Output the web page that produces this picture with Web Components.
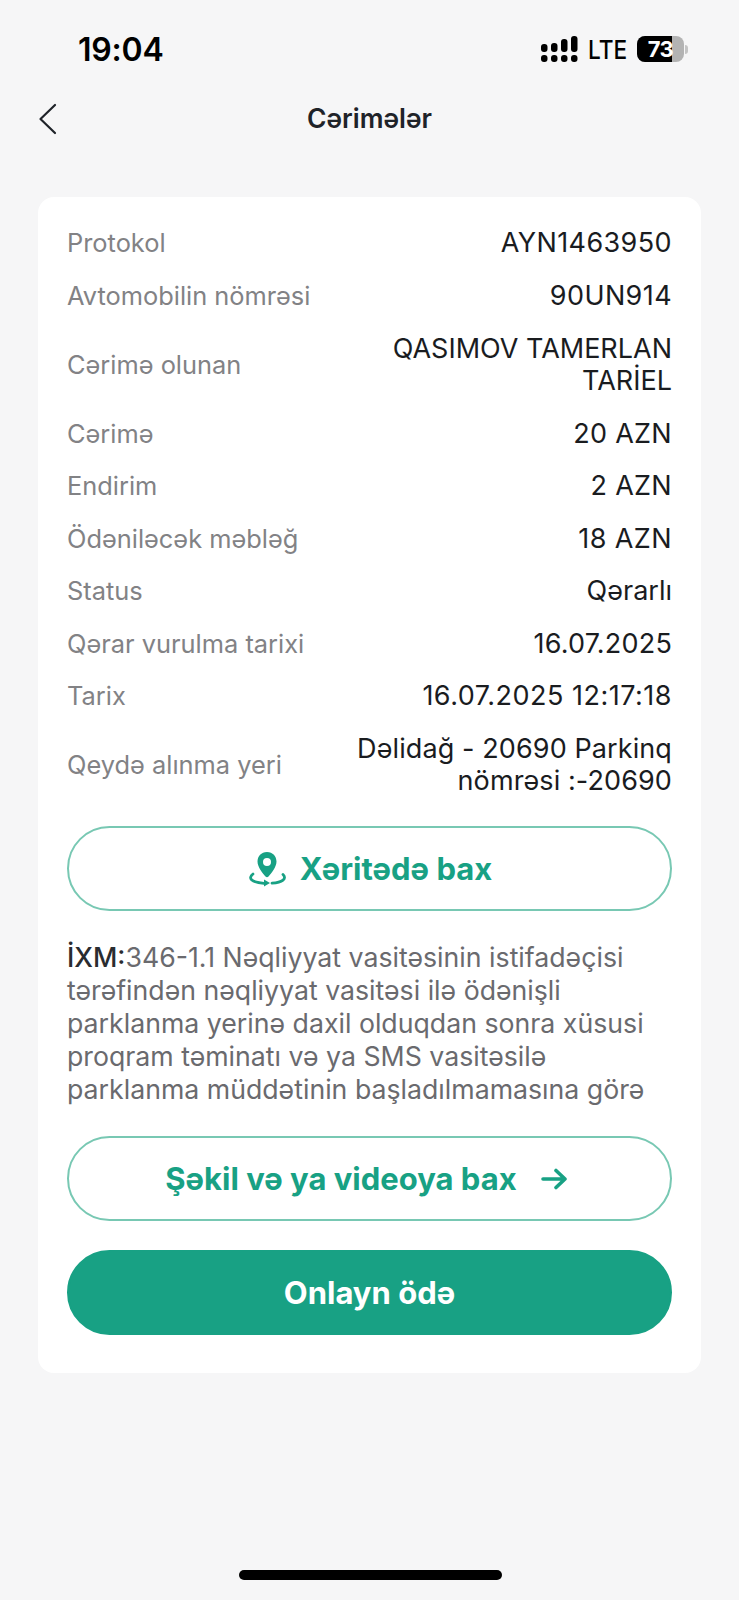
<!DOCTYPE html>
<html>
<head>
<meta charset="utf-8">
<style>
html,body{margin:0;padding:0;background:#f6f6f7;}
body{font-family:Inter,"Liberation Sans",sans-serif;width:739px;height:1600px;overflow:hidden;}
</style>
</head>
<body>
<status-bar></status-bar>
<nav-bar>Cərimələr</nav-bar>
<fine-card>
  <info-row label="Protokol" style="--ls:.4px">AYN1463950</info-row>
  <info-row label="Avtomobilin nömrəsi" style="--ls:.4px">90UN914</info-row>
  <info-row label="Cərimə olunan" style="min-height:86px">QASIMOV TAMERLAN<br>TARİEL</info-row>
  <info-row label="Cərimə" style="--ls:.3px">20 AZN</info-row>
  <info-row label="Endirim" style="--ls:.3px">2 AZN</info-row>
  <info-row label="Ödəniləcək məbləğ" style="--ls:.4px">18 AZN</info-row>
  <info-row label="Status">Qərarlı</info-row>
  <info-row label="Qərar vurulma tarixi" style="--ls:.2px">16.07.2025</info-row>
  <info-row label="Tarix" style="--ls:.5px">16.07.2025 12:17:18</info-row>
  <info-row label="Qeydə alınma yeri" style="min-height:86px;--ls:.1px">Dəlidağ - 20690 Parkinq<br>nömrəsi :-20690</info-row>
  <pill-button style="margin-top:18px">
    <svg slot="before" width="40" height="38" viewBox="0 0 40 38" fill="none">
      <path fill="#18a184" fill-rule="evenodd" d="M20 2C14.200 2 10.500 6.400 10.500 11.500c0 5.600 5.400 12.200 8 15 .9.900 2.100.900 3 0 2.600-2.800 8-9.400 8-15C29.500 6.400 25.800 2 20 2zm0 6a4 4 0 1 1 0 8 4 4 0 0 1 0-8z"/>
      <path stroke="#18a184" stroke-width="2.800" stroke-linecap="round" d="M6 24c-5 4-2.500 8.300 11 9.300M36 24.500c4.200 4-.5 7.900-11 8.700"/>
      <path fill="#18a184" d="M17 29.500l6 3.500-6 3.500z"/>
    </svg>
    Xəritədə bax
  </pill-button>
  <note-text><b>İXM:</b>346-1.1 Nəqliyyat vasitəsinin istifadəçisi<br>tərəfindən nəqliyyat vasitəsi ilə ödənişli<br>parklanma yerinə daxil olduqdan sonra xüsusi<br>proqram təminatı və ya SMS vasitəsilə<br>parklanma müddətinin başladılmamasına görə</note-text>
  <pill-button style="padding-right:7px">
    Şəkil və ya videoya bax
    <svg slot="after" width="26" height="22" viewBox="0 0 26 22" fill="none" stroke="#18a184" stroke-width="3.600" stroke-linecap="round" stroke-linejoin="round"><path d="M2 11h22M15 2.500l9 8.500-9 8.500"/></svg>
  </pill-button>
  <pill-button filled style="margin-top:29px">Onlayn ödə</pill-button>
</fine-card>
<home-bar></home-bar>
<script>
class StatusBar extends HTMLElement{
  constructor(){
    super();
    this.attachShadow({mode:"open"}).innerHTML=`
    <style>
    :host{display:flex;justify-content:space-between;align-items:center;height:50px;padding:24px 51px 0 78px;color:#000;}
    .time{font-size:32px;font-weight:600;letter-spacing:-.2px;}
    .right{display:flex;align-items:center;gap:10px;}
    .lte{font-size:26px;font-weight:500;transform:scaleX(.87);transform-origin:left;width:37px;margin-right:2px;}
    .batt{position:relative;width:47px;height:26px;border-radius:8px;overflow:hidden;background:#b3b3b3;display:flex;align-items:center;justify-content:center;}
    .fill{position:absolute;left:0;top:0;bottom:0;width:35px;background:#000;}
    .num{position:relative;color:#fff;font-size:22px;font-weight:700;letter-spacing:-.5px;}
    .tip{width:3px;height:9px;border-radius:0 3px 3px 0;background:#c4c4c4;margin-left:-9px;}
    </style>
    <span class="time">19:04</span>
    <span class="right">
      <svg width="38" height="28" viewBox="0 0 38 28" fill="#000">
        <rect x="1" y="9" width="6.500" height="8" rx="3"/><rect x="1" y="20" width="6.500" height="7" rx="3"/>
        <rect x="11" y="8" width="6.500" height="9" rx="3"/><rect x="11" y="20" width="6.500" height="7" rx="3"/>
        <rect x="21" y="4" width="6.500" height="13" rx="3"/><rect x="21" y="20" width="6.500" height="7" rx="3"/>
        <rect x="31" y="1" width="6.500" height="16" rx="3"/><rect x="31" y="20" width="6.500" height="7" rx="3"/>
      </svg>
      <span class="lte">LTE</span>
      <span class="batt"><span class="fill"></span><span class="num">73</span></span><span class="tip"></span>
    </span>`;
  }
}
customElements.define("status-bar",StatusBar);

class NavBar extends HTMLElement{
  constructor(){
    super();
    this.attachShadow({mode:"open"}).innerHTML=`
    <style>
    :host{display:flex;align-items:center;justify-content:center;position:relative;height:46px;margin-top:21px;font-size:26.400px;font-weight:600;color:#1f2329;}
    svg{position:absolute;left:38px;top:8px;}
    </style>
    <svg width="20" height="32" viewBox="0 0 20 32" fill="none" stroke="#1f2329" stroke-width="2.200" stroke-linecap="round" stroke-linejoin="round"><path d="M17 2 2.500 16 17 30"/></svg>
    <slot></slot>`;
  }
}
customElements.define("nav-bar",NavBar);

class FineCard extends HTMLElement{
  constructor(){
    super();
    this.attachShadow({mode:"open"}).innerHTML=`
    <style>
    :host{display:flex;flex-direction:column;box-sizing:border-box;width:663px;height:1176px;margin:56px 0 0 38px;padding:20px 29px 0;background:#fff;border-radius:16px;}
    </style>
    <slot></slot>`;
  }
}
customElements.define("fine-card",FineCard);

class InfoRow extends HTMLElement{
  constructor(){
    super();
    this.attachShadow({mode:"open"}).innerHTML=`
    <style>
    :host{display:flex;justify-content:space-between;align-items:center;box-sizing:border-box;min-height:52.400px;font-size:25.400px;line-height:32px;}
    .k{color:#828285;}
    .v{color:#1a1c1f;text-align:right;font-size:27px;letter-spacing:var(--ls,0);}
    </style>
    <span class="k"></span><span class="v"><slot></slot></span>`;
    this.shadowRoot.querySelector(".k").textContent=this.getAttribute("label");
  }
}
customElements.define("info-row",InfoRow);

class PillButton extends HTMLElement{
  constructor(){
    super();
    this.attachShadow({mode:"open"}).innerHTML=`
    <style>
    :host{display:flex;align-items:center;justify-content:center;gap:13px;box-sizing:border-box;height:85px;flex:none;border-radius:43px;border:2px solid #78c8b3;background:#fff;color:#18a184;font-size:31px;font-weight:700;}
    :host([filled]){background:#18a184;border-color:#18a184;color:#fff;}
    ::slotted([slot=after]){margin-left:11px;}
    </style>
    <slot name="before"></slot><slot></slot><slot name="after"></slot>`;
  }
}
customElements.define("pill-button",PillButton);

class NoteText extends HTMLElement{
  constructor(){
    super();
    this.attachShadow({mode:"open"}).innerHTML=`
    <style>
    :host{display:block;margin:30px 0 30px;font-size:26.700px;line-height:33px;color:#6a6a6e;}
    ::slotted(b){color:#2a2c30;font-weight:500;}
    </style>
    <slot></slot>`;
  }
}
customElements.define("note-text",NoteText);

class HomeBar extends HTMLElement{
  constructor(){
    super();
    this.attachShadow({mode:"open"}).innerHTML=`
    <style>
    :host{position:absolute;left:239px;top:1570px;width:263px;height:10px;border-radius:5px;background:#000;}
    </style>`;
  }
}
customElements.define("home-bar",HomeBar);
</script>
</body>
</html>
